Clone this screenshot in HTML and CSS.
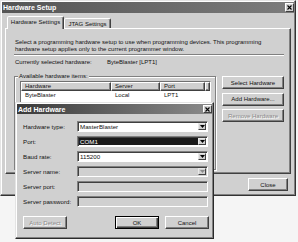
FILE: index.html
```html
<!DOCTYPE html>
<html lang="en">
<head>
  <meta charset="UTF-8" />
  <title>Hardware Setup</title>
  <link rel="stylesheet" href="styles.css">
</head>
<body>
<div class="screen">
  <div class="win">
    <div class="titlebar">
      <span>Hardware Setup</span>
      <span class="tb-close">
        <svg width="5" height="5" viewBox="0 0 5 5"><path d="M0.5 0.5L4.5 4.5M4.5 0.5L0.5 4.5" stroke="#000" stroke-width="1.1"/></svg>
      </span>
    </div>
    <div class="win-body">
      <div class="tabs">
        <div class="tab active">Hardware Settings</div>
        <div class="tab">JTAG Settings</div>
      </div>
      <div class="panel">
        <p class="intro">Select a programming hardware setup to use when programming devices. This programming<br>hardware setup applies only to the current programmer window.</p>
        <div class="sep"></div>
        <div class="current">
          <span class="current-label">Currently selected hardware:</span>
          <span>ByteBlaster [LPT1]</span>
        </div>
        <div class="hw-row">
          <div class="group">
            <div class="group-label">Available hardware items:</div>
            <div class="list">
              <div class="list-head"><span>Hardware</span><span>Server</span><span>Port</span><span></span></div>
              <div class="list-row"><span>ByteBlaster</span><span>Local</span><span>LPT1</span></div>
            </div>
          </div>
          <div class="side-btns">
            <button class="btn">Select Hardware</button>
            <button class="btn">Add Hardware...</button>
            <button class="btn" disabled>Remove Hardware</button>
          </div>
        </div>
      </div>
      <div class="footer">
        <button class="btn btn-close">Close</button>
      </div>
    </div>
  </div>

  <div class="dlg">
    <div class="titlebar dlg-title">
      <span>Add Hardware</span>
      <span class="tb-close small">
        <svg width="5" height="5" viewBox="0 0 5 5"><path d="M0.5 0.5L4.5 4.5M4.5 0.5L0.5 4.5" stroke="#000" stroke-width="1.1"/></svg>
      </span>
    </div>
    <div class="form">
      <span>Hardware type:</span>
      <div class="field"><span class="val">MasterBlaster</span><span class="arrow"><svg width="5" height="3" viewBox="0 0 5 3"><polygon points="0,0 5,0 2.5,3"/></svg></span></div>
      <span>Port:</span>
      <div class="field focus"><span class="val">COM1</span><span class="arrow"><svg width="5" height="3" viewBox="0 0 5 3"><polygon points="0,0 5,0 2.5,3"/></svg></span></div>
      <span>Baud rate:</span>
      <div class="field"><span class="val">115200</span><span class="arrow"><svg width="5" height="3" viewBox="0 0 5 3"><polygon points="0,0 5,0 2.5,3"/></svg></span></div>
      <span>Server name:</span>
      <div class="field off"><span class="val"></span><span class="arrow"><svg width="5" height="3" viewBox="0 0 5 3"><polygon points="0,0 5,0 2.5,3"/></svg></span></div>
      <span>Server port:</span>
      <div class="field off"><span class="val"></span></div>
      <span>Server password:</span>
      <div class="field off"><span class="val"></span></div>
    </div>
    <div class="dlg-btns">
      <button class="btn" disabled>Auto Detect</button>
      <button class="btn btn-ok">OK</button>
      <button class="btn btn-cancel">Cancel</button>
    </div>
  </div>
</div>
</body>
</html>
```

FILE: styles.css
```css
body {
  margin: 0;
  background: #f5f5f5;
  font-family: "Liberation Sans", Arial, sans-serif;
  font-size: 6px;
  color: #111;
}

.screen {
  position: relative;
  width: 298px;
  height: 242px;
  overflow: hidden;
}

.win {
  box-sizing: border-box;
  width: 296px;
  height: 196px;
  padding: 1px;
  background: #d0d0d0;
  border: 1px solid;
  border-color: #e4e4e4 #333 #333 #e4e4e4;
  box-shadow: inset -1px -1px 0 #808080, inset 1px 1px 0 #fff;
}

.titlebar {
  display: flex;
  align-items: center;
  justify-content: space-between;
  height: 11px;
  padding-left: 1px;
  background: linear-gradient(90deg, #555, #7c7c7c);
  color: #fff;
  font-size: 7px;
  font-weight: bold;
}

.tb-close {
  box-sizing: border-box;
  width: 9px;
  height: 9px;
  display: flex;
  align-items: center;
  justify-content: center;
  background: #d0d0d0;
  border: 1px solid;
  border-color: #fff #404040 #404040 #fff;
}

.tb-close.small {
  height: 8px;
}

.win-body {
  padding: 0 3px;
}

.tabs {
  display: flex;
  align-items: flex-start;
  height: 12px;
  margin-top: 3px;
  padding-left: 2px;
}

.tab {
  box-sizing: border-box;
  width: 47px;
  height: 10px;
  margin-top: 2px;
  display: flex;
  align-items: center;
  justify-content: center;
  background: #d0d0d0;
  border: 1px solid;
  border-bottom: 0;
  border-color: #fff #404040 transparent #fff;
  border-radius: 2px 2px 0 0;
  box-shadow: inset -1px 0 0 #808080;
}

.tab.active {
  position: relative;
  z-index: 1;
  width: 57px;
  height: 13px;
  margin-top: 0;
  padding-bottom: 2px;
}

.panel {
  box-sizing: border-box;
  height: 146px;
  padding: 10px 6px 0 8px;
  border: 1px solid;
  border-color: #fff #404040 #404040 #fff;
  box-shadow: inset -1px -1px 0 #808080;
}

.intro {
  margin: 0;
  padding-left: 1px;
  line-height: 6.5px;
  white-space: nowrap;
}

.sep {
  margin-top: 2px;
  border-top: 1px solid #808080;
  border-bottom: 1px solid #fff;
}

.current {
  display: flex;
  margin-top: 3px;
  padding-left: 1px;
  line-height: 7px;
}

.current-label {
  width: 92px;
}

.hw-row {
  display: flex;
  align-items: flex-start;
  gap: 6px;
  margin-top: 10px;
}

.group {
  box-sizing: border-box;
  width: 202px;
  height: 94px;
  border: 1px solid #808080;
  box-shadow: inset 1px 1px 0 #fff, 1px 1px 0 #fff;
}

.group-label {
  width: max-content;
  margin: -4.5px 0 0 3px;
  padding: 0 1px;
  background: #d0d0d0;
  line-height: 7px;
}

.list {
  box-sizing: border-box;
  height: 82px;
  margin: 1.5px 4px 0 5px;
  background: #fff;
  border: 1px solid;
  border-color: #707070 #fff #fff #707070;
}

.list-head {
  display: grid;
  grid-template-columns: 90px 49px 45px 1fr;
  height: 9px;
}

.list-head span {
  box-sizing: border-box;
  padding-left: 3px;
  line-height: 7px;
  background: #d0d0d0;
  border: 1px solid;
  border-color: #fff #404040 #404040 #fff;
  box-shadow: inset -1px -1px 0 #808080;
}

.list-row {
  display: grid;
  grid-template-columns: 90px 49px 45px;
  line-height: 8px;
}

.list-row span {
  padding-left: 4px;
}

.side-btns {
  display: flex;
  flex-direction: column;
  gap: 3.5px;
  width: 62px;
}

.btn {
  box-sizing: border-box;
  height: 13px;
  padding: 0;
  font: inherit;
  color: #111;
  background: #d0d0d0;
  border: 1px solid;
  border-color: #fff #404040 #404040 #fff;
  box-shadow: inset -1px -1px 0 #808080;
}

.btn:disabled {
  color: #8a8a8a;
  text-shadow: 1px 1px 0 #fff;
}

.footer {
  display: flex;
  justify-content: flex-end;
  padding: 4px 3px 0 0;
}

.btn-close {
  width: 40px;
}

/* Add Hardware dialog, on top of the main window */
.dlg {
  position: absolute;
  left: 15px;
  top: 102px;
  box-sizing: border-box;
  width: 199px;
  height: 137px;
  padding: 1px;
  background: #d0d0d0;
  border: 1px solid;
  border-color: #e4e4e4 #2a2a2a #2a2a2a #e4e4e4;
  box-shadow: inset -1px -1px 0 #808080, inset 1px 1px 0 #fff;
}

.dlg-title {
  height: 10px;
  background: linear-gradient(90deg, #3a3a3a, #8a8a8a);
}

.form {
  display: grid;
  grid-template-columns: 54px 131px;
  grid-auto-rows: 11px;
  row-gap: 4px;
  align-items: center;
  margin-top: 7px;
  padding-left: 6px;
  font-size: 6.2px;
}

.field {
  box-sizing: border-box;
  height: 11px;
  display: flex;
  padding: 1px;
  background: #fff;
  border: 1px solid;
  border-color: #808080 #fff #fff #808080;
  box-shadow: inset 1px 1px 0 #404040;
}

.field .val {
  flex: 1;
  padding-left: 1px;
  line-height: 7px;
}

.field.focus .val {
  background: #1a1a1a;
  color: #fff;
}

.field.off {
  background: #d0d0d0;
}

.arrow {
  box-sizing: border-box;
  width: 8px;
  height: 7px;
  display: flex;
  align-items: center;
  justify-content: center;
  background: #d0d0d0;
  border: 1px solid;
  border-color: #e8e8e8 #404040 #404040 #e8e8e8;
}

.arrow svg {
  fill: #000;
}

.field.off .arrow svg {
  fill: #8a8a8a;
}

.dlg-btns {
  display: flex;
  gap: 6px;
  margin-top: 9px;
  padding: 0 3px 0 6px;
}

.dlg-btns .btn {
  width: 44px;
}

.btn-ok {
  margin-left: auto;
  border-color: #000;
  box-shadow: inset 1px 1px 0 #fff, inset -1px -1px 0 #404040, inset -2px -2px 0 #808080;
}
```
